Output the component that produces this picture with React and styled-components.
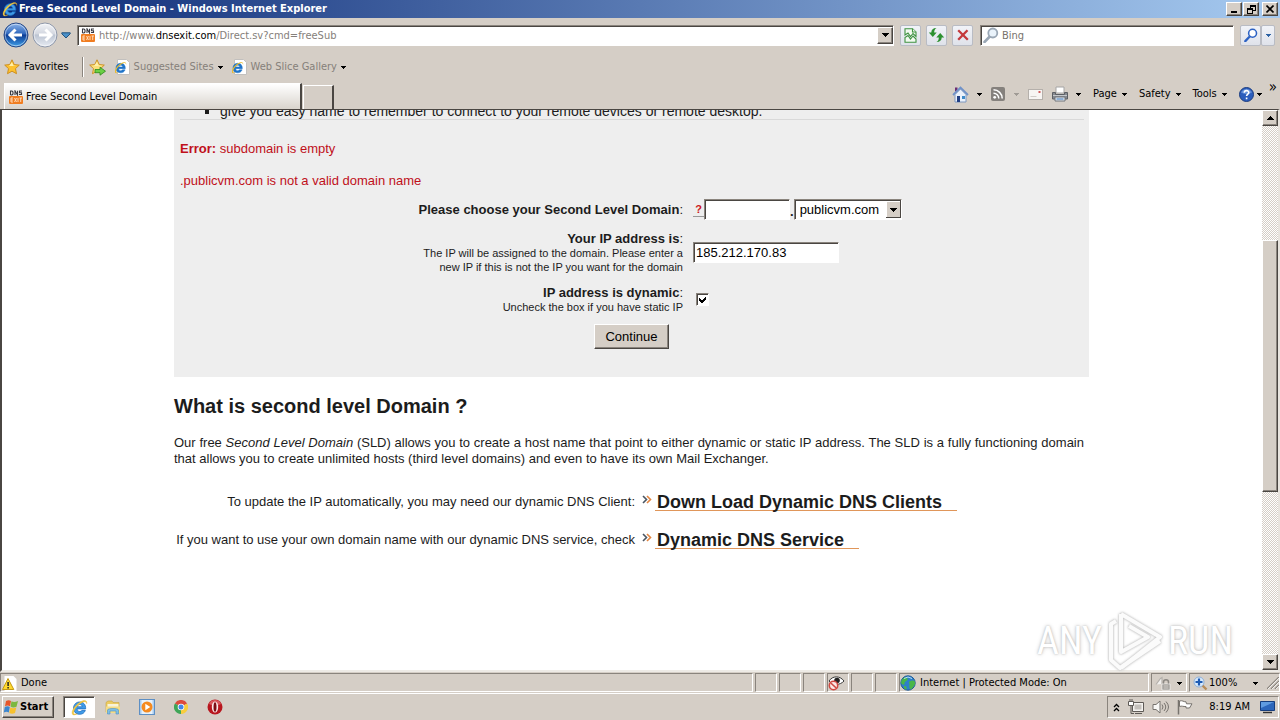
import React from 'react';
import styled, { createGlobalStyle, css } from 'styled-components';

const face = '#d5cec6';
const light = '#ffffff';
const shade = '#8a847d';
const dark = '#4a4642';

const raised = css`
  border: 1px solid;
  border-color: ${light} ${dark} ${dark} ${light};
  box-shadow: inset -1px -1px 0 ${shade};
`;

const sunken = css`
  border: 1px solid;
  border-color: ${shade} ${light} ${light} ${shade};
`;

const field = css`
  ${sunken}
  box-shadow: inset 1px 1px 0 ${dark};
  background: #fff;
  border-radius: 0;
  outline: none;
`;

const GlobalStyle = createGlobalStyle`
  * { box-sizing: border-box; }

  body {
    margin: 0;
    background: ${face};
    color: #000;
    font: 11px/14px 'DejaVu Sans Condensed', 'DejaVu Sans', sans-serif;
  }

  button, input, select {
    margin: 0;
    padding: 0;
    font: inherit;
    color: inherit;
  }

  svg { display: block; flex: none; }
`;

const Window = styled.div`
  display: flex;
  flex-direction: column;
  height: 100vh;
  min-height: 480px;
  overflow: hidden;
`;

/* ---------- title bar ---------- */

const TitleBar = styled.header`
  display: flex;
  align-items: center;
  gap: 1px;
  height: 18px;
  padding: 0 2px;
  background: linear-gradient(90deg, #0c2a76, #a6caf0);
  color: #fff;
  flex: none;
`;

const Title = styled.h1`
  flex: 1;
  margin: 0;
  font-size: 11px;
  line-height: 18px;
  white-space: nowrap;
`;

const CaptionButton = styled.button`
  ${raised}
  display: grid;
  place-items: center;
  width: 16px;
  height: 14px;
  background: ${face};
  margin-left: ${p => (p.$apart ? '2px' : 0)};
`;

/* ---------- address row ---------- */

const AddressRow = styled.div`
  display: flex;
  align-items: center;
  height: 34px;
  padding: 0 5px 0 3px;
  flex: none;
`;

const NavButtons = styled.div`
  display: flex;
  align-items: center;
  gap: 3px;
`;

const IconButton = styled.button`
  display: flex;
  align-items: center;
  gap: ${p => p.$gap || 0}px;
  border: 0;
  background: none;
  white-space: nowrap;
  color: ${p => (p.$muted ? '#85807a' : '#000')};
`;

const AddressBox = styled.div`
  ${field}
  display: flex;
  align-items: center;
  flex: 1;
  height: 21px;
  margin-left: 6px;
  padding: 1px 0 1px 3px;
`;

const AddressText = styled.div`
  display: grid;
  flex: 1;
  align-items: center;
  margin-left: 4px;
  padding-top: 2px;

  > * { grid-area: 1 / 1; }
`;

const AddressInput = styled.input`
  width: 100%;
  border: 0;
  outline: none;
  background: none;
  color: transparent;
`;

const AddressParts = styled.span`
  color: #85807a;
  pointer-events: none;

  b { font-weight: normal; color: #000; }
`;

const DropButton = styled.button`
  ${raised}
  display: grid;
  place-items: center;
  width: 16px;
  height: 17px;
  background: ${face};
`;

const ToolButton = styled.button`
  display: grid;
  place-items: center;
  width: ${p => p.$width || 21}px;
  height: 21px;
  border: 1px solid #b9bcc4;
  border-radius: 2px;
  background: linear-gradient(#f1f3f8, #dfe2ea);
`;

const ToolGroup = styled.div`
  display: flex;
  gap: ${p => p.$gap}px;
  margin-left: 6px;
`;

const SearchBox = styled.label`
  ${field}
  display: flex;
  align-items: center;
  gap: 3px;
  width: 254px;
  height: 21px;
  margin-left: 7px;
  padding: 1px 2px;

  input {
    flex: 1;
    min-width: 0;
    padding-top: 2px;
    border: 0;
    outline: none;
    background: none;
  }
  input::placeholder { color: #77726c; opacity: 1; }
`;

/* ---------- favorites and tabs ---------- */

const FavoritesRow = styled.nav`
  display: flex;
  align-items: center;
  height: 30px;
  padding: 0 4px;
  gap: 9px;
  flex: none;
`;

const Divider = styled.span`
  width: 2px;
  height: 20px;
  margin: 0 -4px 0 4px;
  border-left: 1px solid ${shade};
  border-right: 1px solid ${light};
`;

const TabRow = styled.div`
  display: flex;
  align-items: flex-end;
  height: 27px;
  padding: 0 3px 0 4px;
  flex: none;
`;

const Tab = styled.button`
  display: flex;
  align-items: center;
  gap: 3px;
  width: 298px;
  height: 26px;
  padding: 0 4px;
  border: 1px solid #fff;
  border-right: 2px solid ${dark};
  border-bottom: 0;
  background: linear-gradient(#fff, #d9d4cd);
`;

const NewTab = styled.button`
  width: 31px;
  height: 24px;
  margin-left: 1px;
  border: 1px solid #fff;
  border-right: 2px solid ${dark};
  border-bottom: 0;
  background: ${face};
`;

const CommandBar = styled.div`
  display: flex;
  align-items: center;
  gap: 12px;
  height: 27px;
  margin-left: auto;
  padding-bottom: 3px;
`;

const CommandIcons = styled.div`
  display: flex;
  align-items: center;
  gap: 9px;
`;

const Chevrons = styled.button`
  align-self: flex-start;
  margin-left: -5px;
  border: 0;
  background: none;
  font-size: 15px;
  line-height: 10px;
`;

/* ---------- document ---------- */

const Viewport = styled.div`
  display: flex;
  flex: 1;
  min-height: 0;
  border: 1px solid ${shade};
  border-top-color: ${dark};
  border-left: 2px solid ${dark};
  border-right: 2px solid #e8e4de;
  border-bottom: 2px solid #eeebe6;
  background: #fff;
`;

const Document = styled.main`
  flex: 1;
  min-width: 0;
  padding-right: 1px;
  overflow: hidden;
  color: #1c1c1c;
  font: 13px/16px 'Liberation Sans', Arial, sans-serif;
`;

const Column = styled.div`
  width: 100%;
  max-width: 915px;
  margin: 0 auto;
`;

const Panel = styled.section`
  display: flow-root;
  padding-bottom: 28px;
  background: #eee;
`;

const Benefits = styled.ul`
  margin: -7px 5px 0 6px;
  padding: 0 0 0 40px;
  border-bottom: 1px solid #d9d9d9;
  font-size: 14px;
  list-style-type: square;
`;

const ErrorText = styled.p`
  margin: ${p => p.$top}px 6px 0;
  color: #c0101a;
`;

const Form = styled.form`
  margin-top: 10px;
`;

const FormRow = styled.div`
  display: grid;
  grid-template-columns: 509fr 396fr;
  column-gap: 10px;
  align-items: center;
  margin-bottom: ${p => p.$bottom}px;
`;

const FieldLabel = styled.label`
  justify-self: end;
  max-width: 270px;
  line-height: 15px;
  text-align: right;

  small {
    display: block;
    font-size: 11px;
    line-height: 14px;
  }
`;

const Controls = styled.div`
  display: flex;
  align-items: flex-end;
`;

const HelpLink = styled.a`
  width: 11px;
  margin-bottom: 3px;
  border-bottom: 1px solid #999;
  color: #cc1520;
  font-size: 11px;
  font-weight: bold;
  line-height: 13px;
  text-align: center;
  text-decoration: none;
`;

const TextInput = styled.input`
  ${field}
  width: ${p => p.$width}px;
  height: 21px;
  padding: 0 2px;
  color: #000;
`;

const SelectBox = styled.span`
  display: grid;

  > * { grid-area: 1 / 1; }
  > svg { justify-self: end; align-self: center; margin-right: 1px; pointer-events: none; }
`;

const Select = styled.select`
  ${field}
  appearance: none;
  width: 108px;
  height: 21px;
  padding: 0 18px 0 5px;
  color: #000;
`;

const CheckBox = styled.span`
  display: grid;
  margin: 0 0 0 3px;

  > * { grid-area: 1 / 1; }
  > svg { place-self: center; pointer-events: none; visibility: hidden; }
  > input:checked + svg { visibility: visible; }

  input {
    ${field}
    appearance: none;
    width: 13px;
    height: 13px;
  }
`;

const SubmitButton = styled.button`
  ${raised}
  display: block;
  height: 25px;
  margin: 0 auto;
  padding: 0 10px;
  background: ${face};
  color: #000;
  font-size: 13px;
`;

const Heading = styled.h2`
  margin: 18px 0 17px;
  font-size: 20px;
  line-height: 23px;
`;

const Paragraph = styled.p`
  margin: 0 5px 0 0;
  text-align: justify;
`;

const LinkTable = styled.div`
  display: grid;
  grid-template-columns: 461fr 447fr;
  grid-auto-rows: 22px;
  gap: 16px 7px;
  align-items: center;
  margin-top: 24px;
`;

const LinkLead = styled.span`
  text-align: right;
  white-space: nowrap;
`;

const LinkCell = styled.span`
  display: flex;
  align-items: center;
  gap: 3px;

  svg { margin-bottom: 5px; }
`;

const BigLink = styled.a`
  padding: 0 15px 0 2px;
  border-bottom: 1px solid #e0965a;
  color: #1c1c1c;
  font-size: 18px;
  font-weight: bold;
  line-height: 16px;
  text-decoration: none;
`;

const ScrollBar = styled.div`
  display: flex;
  flex-direction: column;
  width: 16px;
  background: repeating-conic-gradient(#d5cec6 0 25%, #fff 0 50%) 0 0 / 2px 2px;

  button {
    ${raised}
    display: grid;
    place-items: center;
    height: 16px;
    background: ${face};
  }
`;

const Track = styled.div`
  flex: 1;
  display: grid;
  grid-template-rows: 114fr 252fr 162fr;
`;

const Thumb = styled.div`
  ${raised}
  grid-row: 2;
  background: ${face};
`;

const Watermark = styled.div`
  position: absolute;
  right: 47px;
  bottom: 48px;
  display: flex;
  align-items: center;
  gap: 5px;
  color: #fff;
  font: 38px/60px 'Liberation Sans Narrow', 'Roboto Condensed', sans-serif;
  text-shadow: 0 0 2px #bbb, 0 0 4px #ccc;
  pointer-events: none;

  svg { filter: drop-shadow(0 0 1px #bbb) drop-shadow(0 0 1px #ddd); }
`;

/* ---------- status bar and taskbar ---------- */

const StatusBar = styled.footer`
  display: flex;
  gap: 2px;
  height: 22px;
  padding: 1px 0;
  border-bottom: 1px solid #fff;
  flex: none;
`;

const StatusCell = styled.div`
  ${sunken}
  display: flex;
  align-items: center;
  gap: ${p => p.$gap || 4}px;
  flex: ${p => (p.$width ? 'none' : 1)};
  width: ${p => (p.$width ? p.$width + 'px' : 'auto')};
  padding-top: 1px;
  padding-left: ${p => p.$pad || 0}px;
  white-space: nowrap;
`;

const ZoomLevel = styled.span`
  flex: 1;
`;

const TaskBar = styled.footer`
  display: flex;
  align-items: center;
  height: 26px;
  padding: 0 1px 0 2px;
  flex: none;
`;

const StartButton = styled.button`
  ${raised}
  display: flex;
  align-items: center;
  gap: 1px;
  width: 52px;
  height: 22px;
  background: ${face};
  font-weight: bold;
`;

const TaskButton = styled.button`
  display: grid;
  place-items: center;
  width: ${p => (p.$active ? 32 : 34)}px;
  height: 22px;
  border: 0;
  background: none;
  ${p => p.$active && css`
    ${field}
    margin: 0 1px 0 9px;
  `}
`;

const Tray = styled.div`
  ${sunken}
  display: flex;
  align-items: center;
  gap: 8px;
  height: 22px;
  margin-left: auto;
  padding: 0 3px 0 5px;
`;

const Clock = styled.time`
  margin: 0 2px 0 8px;
`;

/* ---------- drawings ---------- */

const Arrow = ({ up = false }) => (
  <svg width="7" height="4" viewBox="0 0 7 4" shapeRendering="crispEdges">
    <path d={up ? 'M0 4h7L3.5 0z' : 'M0 0h7L3.5 4z'} />
  </svg>
);

const SmallArrow = ({ color = '#000' }) => (
  <svg width="5" height="3" viewBox="0 0 5 3" shapeRendering="crispEdges">
    <path d="M0 0h5v1H0zM1 1h3v1H1zM2 2h1v1H2z" fill={color} />
  </svg>
);

const IeLogo = ({ size = 16 }) => (
  <svg width={size} height={size} viewBox="0 0 16 16">
    <path d="M13.8 9.3H5.7c.1 1.6 1.1 2.5 2.5 2.5 1 0 1.7-.4 2.1-1.1h3.2c-.8 2.4-2.7 3.7-5.3 3.7-3.5 0-5.8-2.4-5.8-5.8s2.4-5.8 5.8-5.8 5.8 2.3 5.6 6.5zM5.8 7.3h4.8C10.4 6 9.5 5.2 8.2 5.2S6 6 5.8 7.3z" fill="#3f9be8" stroke="#1d6bbd" strokeWidth=".7" />
    <path d="M14.8 4.5C15.5.8 12 .6 8 3.2 3.5 6.2.2 11.2 1.2 14c.6 1.7 3 .9 4.8-.2-2 .6-3.3.7-3.5-.4C2.2 11 5 7 8.6 4.4c3-2.200 5.700-2.900 6.200.1z" fill="#f7cf45" stroke="#d9a224" strokeWidth=".3" />
  </svg>
);

const IePage = () => (
  <svg width="15" height="16" viewBox="0 0 15 16">
    <path d="M2.500.5h9l3 3v12h-12z" fill="#fff" stroke="#c2c0be" />
    <g transform="translate(-1 2) scale(.82)">
      <path d="M13.8 9.3H5.7c.1 1.6 1.1 2.5 2.5 2.5 1 0 1.7-.4 2.1-1.1h3.2c-.8 2.4-2.7 3.7-5.3 3.7-3.5 0-5.8-2.400-5.800-5.800s2.400-5.800 5.800-5.800 5.800 2.300 5.600 6.500zM5.800 7.300h4.800C10.400 6 9.500 5.200 8.200 5.200S6 6 5.800 7.300z" fill="#1f74c9" stroke="#1f74c9" strokeWidth=".6" />
      <path d="M14.800 4.500C15.500.8 12 .6 8 3.200 3.500 6.200.2 11.200 1.200 14c.6 1.700 3 .9 4.800-.2-2 .6-3.300.7-3.500-.4C2.200 11 5 7 8.600 4.400c3-2.200 5.700-2.900 6.200.1z" fill="#e8bb2f" />
    </g>
  </svg>
);

const NavOrb = ({ forward }) => (
  <svg width="26" height="26" viewBox="0 0 26 26">
    <defs>
      <linearGradient id={forward ? 'orbF' : 'orbB'} x2="0" y2="1">
        <stop offset="0" stopColor={forward ? '#f4f5f8' : '#8db5ea'} />
        <stop offset=".45" stopColor={forward ? '#d3d7e0' : '#2f67bd'} />
        <stop offset=".5" stopColor={forward ? '#bcc4d2' : '#0d3c94'} />
        <stop offset="1" stopColor={forward ? '#e8ecf3' : '#3ea0ea'} />
      </linearGradient>
    </defs>
    <circle cx="13" cy="13" r="12" fill={`url(#${forward ? 'orbF' : 'orbB'})`} stroke={forward ? '#8f98aa' : '#2a4a86'} />
    <circle cx="13" cy="13" r="10.800" fill="none" stroke="#fff" strokeOpacity=".5" />
    <path d="M12.500 7.500 7 13l5.500 5.500M7.500 13H19" transform={forward ? 'matrix(-1 0 0 1 26 0)' : undefined} fill="none" stroke="#fff" strokeWidth="3" />
  </svg>
);

const DnsIcon = () => (
  <svg width="14" height="14" viewBox="0 0 14 14">
    <path d="M1.500 .5v4.500M1.500 1H3l1 1v2L3 5H1.500M6 5V.8L8.500 5V.8M13 1h-2.500v1.800h2V4.500H10" fill="none" stroke="#3a3a42" strokeWidth="1.100" />
    <rect y="6" width="14" height="8" rx="1" fill="#f07d21" />
    <path d="M4 8H2v4h2M2 10h2M5.500 8l2 4M7.500 8l-2 4M9 8v4M10.500 8H13M11.700 8v4" fill="none" stroke="#ffe2c4" strokeWidth=".9" />
  </svg>
);

const starPath = 'M8 .8l2.200 4.700 5.100.6-3.800 3.500 1 5.100L8 12.200l-4.500 2.500 1-5.100L.7 6.100l5.100-.6z';

const Star = ({ add }) => (
  <svg width="17" height="17" viewBox="0 0 17 17">
    <path d={starPath} fill={add ? '#fbe07a' : '#fdc12f'} stroke="#c98a1a" strokeWidth=".9" />
    <path d="M8 3l1.400 3.400 3.400.5H5z" fill="#fff0a8" />
    {add && <path d="M6 10.500h5V8.200l5.500 4L11 16.200v-2.500H6z" fill="#6bd045" stroke="#2c8a1d" strokeWidth=".8" />}
  </svg>
);

const Magnifier = ({ stroke, glass = '#fff', size = 16 }) => (
  <svg width={size} height={size} viewBox="0 0 16 16">
    <path d="M6.800 9.500 1.500 15" stroke={stroke} strokeWidth="2.600" strokeLinecap="round" />
    <circle cx="9.800" cy="6" r="4.500" fill={glass} stroke={stroke} strokeWidth="1.800" />
  </svg>
);

const BrokenPage = () => (
  <svg width="13" height="15" viewBox="0 0 13 15" fill="#f2faf0" stroke="#3f9340" strokeWidth="1.100">
    <path d="M1 7V.8h7.500L12 4v4.500L9 5.500 6.500 8.500 4 5z" />
    <path d="M8.500.8V4H12" />
    <path d="M1 14.200V9.500L4 7.500l2.500 3.500L9 8l3 3v3.200z" />
  </svg>
);

const Refresh = () => (
  <svg width="17" height="16" viewBox="0 0 17 16" fill="#2d9130">
    <path d="M8.500 1C5.500.8 3.300 2.500 3.300 5.500H.8L4.800 10 8.700 5.500H6.200C6.200 3.500 6.800 2 8.500 1z" />
    <path d="M8.500 15c3 .2 5.200-1.500 5.200-4.500h2.500L12.200 6l-3.900 4.500h2.500c0 2-.6 3.500-2.300 4.500z" />
  </svg>
);

const Cross = () => (
  <svg width="12" height="12" viewBox="0 0 12 12">
    <path d="M1.200 1.200 10.800 10.800M10.500 1.200 1.200 10.800" stroke="#c4393c" strokeWidth="2.300" />
  </svg>
);

const House = () => (
  <svg width="17" height="17" viewBox="0 0 17 17">
    <path d="M3 1.500h2.500v4H3z" fill="#6b2d74" />
    <path d="M3 8.500 8.500 3l5.500 5.500V16H3z" fill="#eaf1fb" stroke="#7f98c0" />
    <path d="M1 9 8.500 1.500 16 9" fill="none" stroke="#7092c8" strokeWidth="1.800" />
    <path d="M5 10h3v6H5z" fill="#213f83" />
    <path d="M10 10h3v3h-3z" fill="#3f8bc9" />
  </svg>
);

const Rss = () => (
  <svg width="14" height="14" viewBox="0 0 14 14">
    <rect width="14" height="14" rx="2" fill="#85817d" />
    <circle cx="3.700" cy="10.300" r="1.400" fill="#fff" />
    <path d="M2.500 6.200a5.300 5.300 0 0 1 5.300 5.300M2.500 2.800a8.700 8.700 0 0 1 8.700 8.700" fill="none" stroke="#fff" strokeWidth="1.500" />
  </svg>
);

const Mail = () => (
  <svg width="15" height="11" viewBox="0 0 15 11">
    <rect x=".5" y=".5" width="14" height="10" fill="#f7f5f3" stroke="#b5b0ab" />
    <path d="M10.500 2h2v2h-2z" fill="#d05a5a" />
    <path d="M2.500 7.500h6" stroke="#d0ccc8" />
  </svg>
);

const Printer = () => (
  <svg width="16" height="16" viewBox="0 0 16 16">
    <path d="M4 1h8v6H4z" fill="#fff" stroke="#a5a5a5" />
    <path d="M.5 6.500h3v2h9v-2h3V13H.5z" fill="#868a90" stroke="#5c5f65" />
    <path d="M1 9.500h14" stroke="#c5c8cc" />
    <path d="M3 11h10v4H3z" fill="#e4ebf4" stroke="#70747b" />
    <path d="M4.500 13h7" stroke="#3a76b8" />
  </svg>
);

const Help = () => (
  <svg width="15" height="15" viewBox="0 0 15 15">
    <circle cx="7.500" cy="7.500" r="7" fill="#2b5dbc" stroke="#1c3d80" />
    <path d="M2 5.500a6 6 0 0 1 11 0Q7.500 8.500 2 5.500z" fill="#7ca5e4" fillOpacity=".7" />
    <path d="M5.300 5.800c0-3 4.500-2.800 4.500-.3 0 1.600-2.200 1.600-2.200 3.500M7.600 10.500v1.800" fill="none" stroke="#fff" strokeWidth="1.600" />
  </svg>
);

const Warning = () => (
  <svg width="15" height="15" viewBox="0 0 15 15">
    <path d="M2.500 0h9l3 3v12h-12z" fill="#fff" />
    <path d="M6 2.500 11.800 13.500H.5z" fill="#ffd92e" stroke="#c49a13" />
    <path d="M6.100 6v4M6.100 11v1.500" stroke="#222" strokeWidth="1.500" />
  </svg>
);

const BlockedEye = () => (
  <svg width="17" height="16" viewBox="0 0 17 16">
    <path d="M1 6c3.500-5.500 11-5.500 15 0-4 4.500-11 4.500-15 0z" fill="#fff" stroke="#3a3a3a" />
    <circle cx="9" cy="5.500" r="2.800" fill="#222" />
    <circle cx="5.500" cy="10.500" r="4.200" fill="#fbe9e6" stroke="#d04a42" strokeWidth="1.600" />
    <path d="m2.800 8 5.400 5" stroke="#d04a42" strokeWidth="1.600" />
  </svg>
);

const Globe = () => (
  <svg width="16" height="16" viewBox="0 0 16 16">
    <circle cx="8" cy="8" r="7.200" fill="#2d7fc9" stroke="#205a94" />
    <path d="M3 3.500C6 1 8 2.500 7.500 4.500S4.500 6 4.500 8.500 2 9 1.300 8.500 1.500 5 3 3.500zM9.500 6.500c2-1 4-1.500 5.200 0S14.500 11 12 13.500 9 11 9.500 9.500 8 7.500 9.500 6.500zM4 11c2-.5 3 1 2.500 3.500-2-.3-3-1.500-2.500-3.500z" fill="#48b648" />
    <path d="M4 3.500q4-3 8 0" stroke="#b6defa" fill="none" />
  </svg>
);

const LockDoc = () => (
  <svg width="16" height="15" viewBox="0 0 16 15" fill="none">
    <path d="M1 8.500 5.500 2.500 7 1.500V8" fill="#f2f0ee" stroke="#b4b0ab" strokeWidth="1.200" />
    <path d="M8.500 8V6c0-3 5-3 5 0v2" stroke="#8c8883" strokeWidth="1.500" />
    <path d="M7 8h8v6H7z" fill="#9b9792" stroke="#fff" strokeWidth=".6" />
    <path d="M8.500 10h5M8.500 12h5" stroke="#d8d5d1" />
  </svg>
);

const ZoomPlus = () => (
  <svg width="15" height="15" viewBox="0 0 15 15">
    <path d="m9 9 4.500 4.500" stroke="#b98d59" strokeWidth="2.400" />
    <circle cx="6" cy="6" r="5" fill="#d9eafc" stroke="#8fb0d8" />
    <path d="M6 2.500v7M2.500 6h7" stroke="#1f5cb4" strokeWidth="2.200" />
  </svg>
);

const Grip = () => (
  <svg width="12" height="12" viewBox="0 0 12 12">
    <path d="M0 12 12 0M4 12l8-8M8 12l4-4" stroke={shade} strokeWidth="1.400" />
    <path d="M1 12 12 1M5 12l7-7M9 12l3-3" stroke="#fff" strokeWidth=".8" />
  </svg>
);

const WindowsFlag = () => (
  <svg width="16" height="16" viewBox="0 0 16 16">
    <path d="M3 2c2-1 3.500-1 5 0L7 7.300c-1.500-1-3.200-1-5 0z" fill="#e6562b" />
    <path d="M8.500 2.300c1.700 1 3.800 1 6.500-.3l-1.500 5.800c-2.200 1-4.300 1-6-.2z" fill="#7cb83f" />
    <path d="M1.800 8c2-1 3.500-1 5 0l-1 5.500c-1.500-1-3.200-1-5 0z" fill="#3b86cf" />
    <path d="M7.300 8.400c1.700 1 3.700 1 6 0L12 13.900c-2 1-4 1-5.700 0z" fill="#f7c12e" />
  </svg>
);

const Explorer = () => (
  <svg width="16" height="16" viewBox="0 0 16 16">
    <path d="M1 3.500 3 2h4l1 1.500h6V13H1z" fill="#eccb62" stroke="#c8a540" strokeWidth=".6" />
    <path d="M2.500 5h11v4h-11z" fill="#f8f3da" />
    <path d="M1 7.500h14V14H1z" fill="#f5dc86" />
    <path d="M2.500 15v-4c0-2 11-2 11 0v4H11v-3H5v3z" fill="#7fbfe6" stroke="#4b90c2" strokeWidth=".6" />
  </svg>
);

const MediaPlayer = () => (
  <svg width="16" height="16" viewBox="0 0 16 16">
    <rect x=".5" y=".5" width="15" height="15" fill="#a9cdf0" stroke="#5d8fc4" />
    <rect x="2.500" y="1" width="11" height="14" fill="#e8f2fb" />
    <circle cx="8" cy="8" r="5.500" fill="#f58a1f" />
    <path d="m6.300 4.800 5 3.200-5 3.200z" fill="#fff" />
  </svg>
);

const Chrome = () => (
  <svg width="14" height="14" viewBox="0 0 14 14">
    <path d="M7 7 .9 3.500A7 7 0 0 1 13.100 3.500z" fill="#dd4a3c" />
    <path d="M7 7V14A7 7 0 0 1 .9 3.500z" fill="#3fa557" />
    <path d="M7 7l6.100-3.500A7 7 0 0 1 7 14z" fill="#f8cd3d" />
    <circle cx="7" cy="7" r="3.300" fill="#fff" />
    <circle cx="7" cy="7" r="2.500" fill="#4486e8" />
  </svg>
);

const Opera = () => (
  <svg width="16" height="16" viewBox="0 0 16 16">
    <circle cx="8" cy="8" r="7.500" fill="#b8161e" />
    <path d="M2 5a6.500 6.500 0 0 1 12 0Q8 8 2 5z" fill="#d9575c" />
    <ellipse cx="8" cy="8" rx="3.200" ry="5.500" fill="#fbeaea" />
    <ellipse cx="8" cy="8" rx="1.500" ry="4.700" fill="#7d0d14" />
  </svg>
);

const DoubleUp = () => (
  <svg width="7" height="9" viewBox="0 0 7 9" fill="none" stroke="#000" strokeWidth="1.300">
    <path d="m1 4 2.500-2.500L6 4M1 8l2.500-2.500L6 8" />
  </svg>
);

const Network = () => (
  <svg width="16" height="16" viewBox="0 0 16 16">
    <path d="M4.500 3.500h11v9h-11z" fill="#f4f2ef" stroke="#5f5b57" />
    <path d="M6.500 5.500h7v5h-7z" fill="#c4c0bb" />
    <path d="M7 14.500h7M3 6v8.500h3" fill="none" stroke="#5f5b57" />
    <path d="M.5 2.500h5v4h-5zM2 0v2.500M4 0v2.500" fill="#fff" stroke="#5f5b57" />
  </svg>
);

const Speaker = () => (
  <svg width="17" height="14" viewBox="0 0 17 14" fill="none" stroke="#77736e">
    <path d="M1 4.500h3L8 1v12L4 9.500H1z" fill="#f8f7f5" />
    <path d="M10 4.500q2 2.500 0 5M12 3q3.500 4 0 8M14 1.500q5 5.500 0 11" />
  </svg>
);

const Flag = () => (
  <svg width="16" height="16" viewBox="0 0 16 16">
    <path d="M1.500 1v14.500" stroke="#77736e" strokeWidth="1.500" />
    <path d="M2.500 2c3-1 4 1 6.500.8l.5 2h5.500L12.500 9H9V7.500c-3 .3-4-1-6.500 0z" fill="#fff" stroke="#77736e" />
  </svg>
);

const Desktop = () => (
  <svg width="15" height="14" viewBox="0 0 15 14">
    <path d="M.5 1.500h14v9H.5z" fill="#2c66bb" stroke="#153d7d" />
    <path d="M1 2h13L1 8z" fill="#5f9be0" />
    <path d="M3 12.500h9" stroke="#333" strokeWidth="1.400" />
  </svg>
);

const LinkArrows = () => (
  <svg width="10" height="9" viewBox="0 0 10 9" fill="none" strokeWidth="1.600">
    <path d="m1 1 3.500 3.500L1 8" stroke="#4a5663" />
    <path d="m5 1 3.500 3.500L5 8" stroke="#e38540" />
  </svg>
);

const PlayMark = () => (
  <svg width="56" height="62" viewBox="0 0 56 62" fill="none" stroke="#fbfbfb" strokeWidth="4" strokeLinejoin="round">
    <path d="M14 4 53 27 14 58M14 4v38l27-15-19-11" />
    <path d="M9 11 4 14v36l9 8 40-27" />
  </svg>
);

const SelectArrow = () => (
  <svg width="15" height="17" viewBox="0 0 15 17" shapeRendering="crispEdges">
    <path d="M0 0h15v17H0z" fill={face} />
    <path d="M.5 17V.5H15" fill="none" stroke="#fff" />
    <path d="M0 16.500h14.500V0" fill="none" stroke={dark} />
    <path d="M4 7h7l-3.500 4z" fill="#000" />
  </svg>
);

const links = [
  { lead: 'To update the IP automatically, you may need our dynamic DNS Client:', text: 'Down Load Dynamic DNS Clients' },
  { lead: 'If you want to use your own domain name with our dynamic DNS service, check', text: 'Dynamic DNS Service' }
];

export default function App() {
  return (
    <Window>
      <GlobalStyle />

      <TitleBar>
        <IeLogo />
        <Title>Free Second Level Domain - Windows Internet Explorer</Title>
        <CaptionButton aria-label="Minimize">
          <svg width="8" height="8"><path d="M1 6h6v2H1z" /></svg>
        </CaptionButton>
        <CaptionButton aria-label="Restore">
          <svg width="9" height="9" fill="none" stroke="#000" shapeRendering="crispEdges">
            <path d="M3 3V.5h5.500v5H6M3 1.500h5.500M.5 3.500h5v5h-5zM.5 4.500h5" />
          </svg>
        </CaptionButton>
        <CaptionButton aria-label="Close" $apart>
          <svg width="8" height="8" stroke="#000" strokeWidth="1.600"><path d="m.5.5 7 7M7.500.5l-7 7" /></svg>
        </CaptionButton>
      </TitleBar>

      <AddressRow>
        <NavButtons>
          <IconButton aria-label="Back"><NavOrb /></IconButton>
          <IconButton aria-label="Forward"><NavOrb forward /></IconButton>
          <IconButton aria-label="Recent pages">
            <svg width="10" height="7" viewBox="0 0 10 7"><path d="M.8.8h8.400v1L5 6 .8 1.800z" fill="#4a90c8" stroke="#23537f" /></svg>
          </IconButton>
        </NavButtons>
        <AddressBox>
          <DnsIcon />
          <AddressText>
            <AddressInput aria-label="Address" defaultValue="http://www.dnsexit.com/Direct.sv?cmd=freeSub" />
            <AddressParts aria-hidden="true">http://www.<b>dnsexit.com</b>/Direct.sv?cmd=freeSub</AddressParts>
          </AddressText>
          <DropButton aria-label="Show addresses"><Arrow /></DropButton>
        </AddressBox>
        <ToolGroup $gap={5}>
          <ToolButton aria-label="Compatibility view"><BrokenPage /></ToolButton>
          <ToolButton aria-label="Refresh"><Refresh /></ToolButton>
          <ToolButton aria-label="Stop"><Cross /></ToolButton>
        </ToolGroup>
        <SearchBox>
          <Magnifier stroke="#9aa7b5" glass="#eaf3fb" />
          <input type="text" placeholder="Bing" aria-label="Search" />
        </SearchBox>
        <ToolGroup $gap={0}>
          <ToolButton aria-label="Search" $width={21}><Magnifier stroke="#2c62c4" size={14} /></ToolButton>
          <ToolButton aria-label="Search options" $width={14}><SmallArrow color="#2c62a4" /></ToolButton>
        </ToolGroup>
      </AddressRow>

      <FavoritesRow>
        <IconButton $gap={3}><Star />Favorites</IconButton>
        <Divider />
        <IconButton aria-label="Add to favorites bar"><Star add /></IconButton>
        <IconButton $gap={4} $muted><IePage />Suggested Sites<SmallArrow /></IconButton>
        <IconButton $gap={4} $muted><IePage />Web Slice Gallery<SmallArrow /></IconButton>
      </FavoritesRow>

      <TabRow>
        <Tab><DnsIcon />Free Second Level Domain</Tab>
        <NewTab aria-label="New tab" />
        <CommandBar>
          <CommandIcons>
            <IconButton $gap={8} aria-label="Home"><House /><SmallArrow /></IconButton>
            <IconButton $gap={9} aria-label="Feeds"><Rss /><SmallArrow color="#a09b95" /></IconButton>
            <IconButton aria-label="Read mail"><Mail /></IconButton>
            <IconButton $gap={8} aria-label="Print"><Printer /><SmallArrow /></IconButton>
          </CommandIcons>
          <IconButton $gap={5}>Page<SmallArrow /></IconButton>
          <IconButton $gap={5}>Safety<SmallArrow /></IconButton>
          <IconButton $gap={5}>Tools<SmallArrow /></IconButton>
          <IconButton $gap={3} aria-label="Help"><Help /><SmallArrow /></IconButton>
          <Chevrons aria-label="More">»</Chevrons>
        </CommandBar>
      </TabRow>

      <Viewport>
        <Document>
          <Column>
            <Panel>
              <Benefits>
                <li>give you easy name to remember to connect to your remote devices or remote desktop.</li>
              </Benefits>
              <ErrorText $top={21}><b>Error:</b> subdomain is empty</ErrorText>
              <ErrorText $top={16}>.publicvm.com is not a valid domain name</ErrorText>

              <Form onSubmit={e => e.preventDefault()}>
                <FormRow $bottom={11}>
                  <FieldLabel htmlFor="sub"><b>Please choose your Second Level Domain</b>:</FieldLabel>
                  <Controls>
                    <HelpLink href="#help">?</HelpLink>
                    <TextInput id="sub" $width={86} />
                    <b>.</b>
                    <SelectBox>
                      <Select aria-label="Domain" defaultValue="publicvm.com">
                        <option>publicvm.com</option>
                      </Select>
                      <SelectArrow />
                    </SelectBox>
                  </Controls>
                </FormRow>
                <FormRow $bottom={11}>
                  <FieldLabel htmlFor="ip">
                    <b>Your IP address is</b>:
                    <small>The IP will be assigned to the domain. Please enter a new IP if this is not the IP you want for the domain</small>
                  </FieldLabel>
                  <Controls><TextInput id="ip" $width={146} defaultValue="185.212.170.83" /></Controls>
                </FormRow>
                <FormRow $bottom={10}>
                  <FieldLabel htmlFor="dynamic">
                    <b>IP address is dynamic</b>:
                    <small>Uncheck the box if you have static IP</small>
                  </FieldLabel>
                  <Controls>
                    <CheckBox>
                      <input id="dynamic" type="checkbox" defaultChecked />
                      <svg width="7" height="7" viewBox="0 0 7 7" shapeRendering="crispEdges">
                        <path d="M0 2v3l2 2h1l4-4V0L2.500 4.500z" />
                      </svg>
                    </CheckBox>
                  </Controls>
                </FormRow>
                <SubmitButton type="submit">Continue</SubmitButton>
              </Form>
            </Panel>

            <Heading>What is second level Domain ?</Heading>
            <Paragraph>
              Our free <i>Second Level Domain</i> (SLD) allows you to create a host name that point to either dynamic or
              static IP address. The SLD is a fully functioning domain that allows you to create unlimited hosts (third
              level domains) and even to have its own Mail Exchanger.
            </Paragraph>
            <LinkTable>
              {links.map(({ lead, text }) => (
                <React.Fragment key={text}>
                  <LinkLead>{lead}</LinkLead>
                  <LinkCell><LinkArrows /><BigLink href="#clients">{text}</BigLink></LinkCell>
                </React.Fragment>
              ))}
            </LinkTable>
          </Column>
        </Document>
        <ScrollBar>
          <button aria-label="Scroll up"><Arrow up /></button>
          <Track><Thumb /></Track>
          <button aria-label="Scroll down"><Arrow /></button>
        </ScrollBar>
      </Viewport>
      <Watermark>
        <span>ANY</span>
        <PlayMark />
        <span>RUN</span>
      </Watermark>

      <StatusBar>
        <StatusCell $pad={1}><Warning />Done</StatusCell>
        <StatusCell $width={22} />
        <StatusCell $width={22} />
        <StatusCell $width={22} />
        <StatusCell $width={22}><BlockedEye /></StatusCell>
        <StatusCell $width={22} />
        <StatusCell $width={22} />
        <StatusCell $width={250}><Globe />Internet | Protected Mode: On</StatusCell>
        <StatusCell $width={36} $pad={3} $gap={6}><LockDoc /><SmallArrow /></StatusCell>
        <StatusCell $width={91} $pad={3} $gap={1}>
          <ZoomPlus />
          <ZoomLevel>100%</ZoomLevel>
          <IconButton $gap={9} aria-label="Change zoom level"><SmallArrow /><Grip /></IconButton>
        </StatusCell>
      </StatusBar>

      <TaskBar>
        <StartButton><WindowsFlag />Start</StartButton>
        <TaskButton $active aria-label="Internet Explorer"><IeLogo size={17} /></TaskButton>
        <TaskButton aria-label="Explorer"><Explorer /></TaskButton>
        <TaskButton aria-label="Media Player"><MediaPlayer /></TaskButton>
        <TaskButton aria-label="Chrome"><Chrome /></TaskButton>
        <TaskButton aria-label="Opera"><Opera /></TaskButton>
        <Tray>
          <DoubleUp />
          <Network />
          <Speaker />
          <Flag />
          <Clock>8:19 AM</Clock>
          <Desktop />
        </Tray>
      </TaskBar>
    </Window>
  );
}
